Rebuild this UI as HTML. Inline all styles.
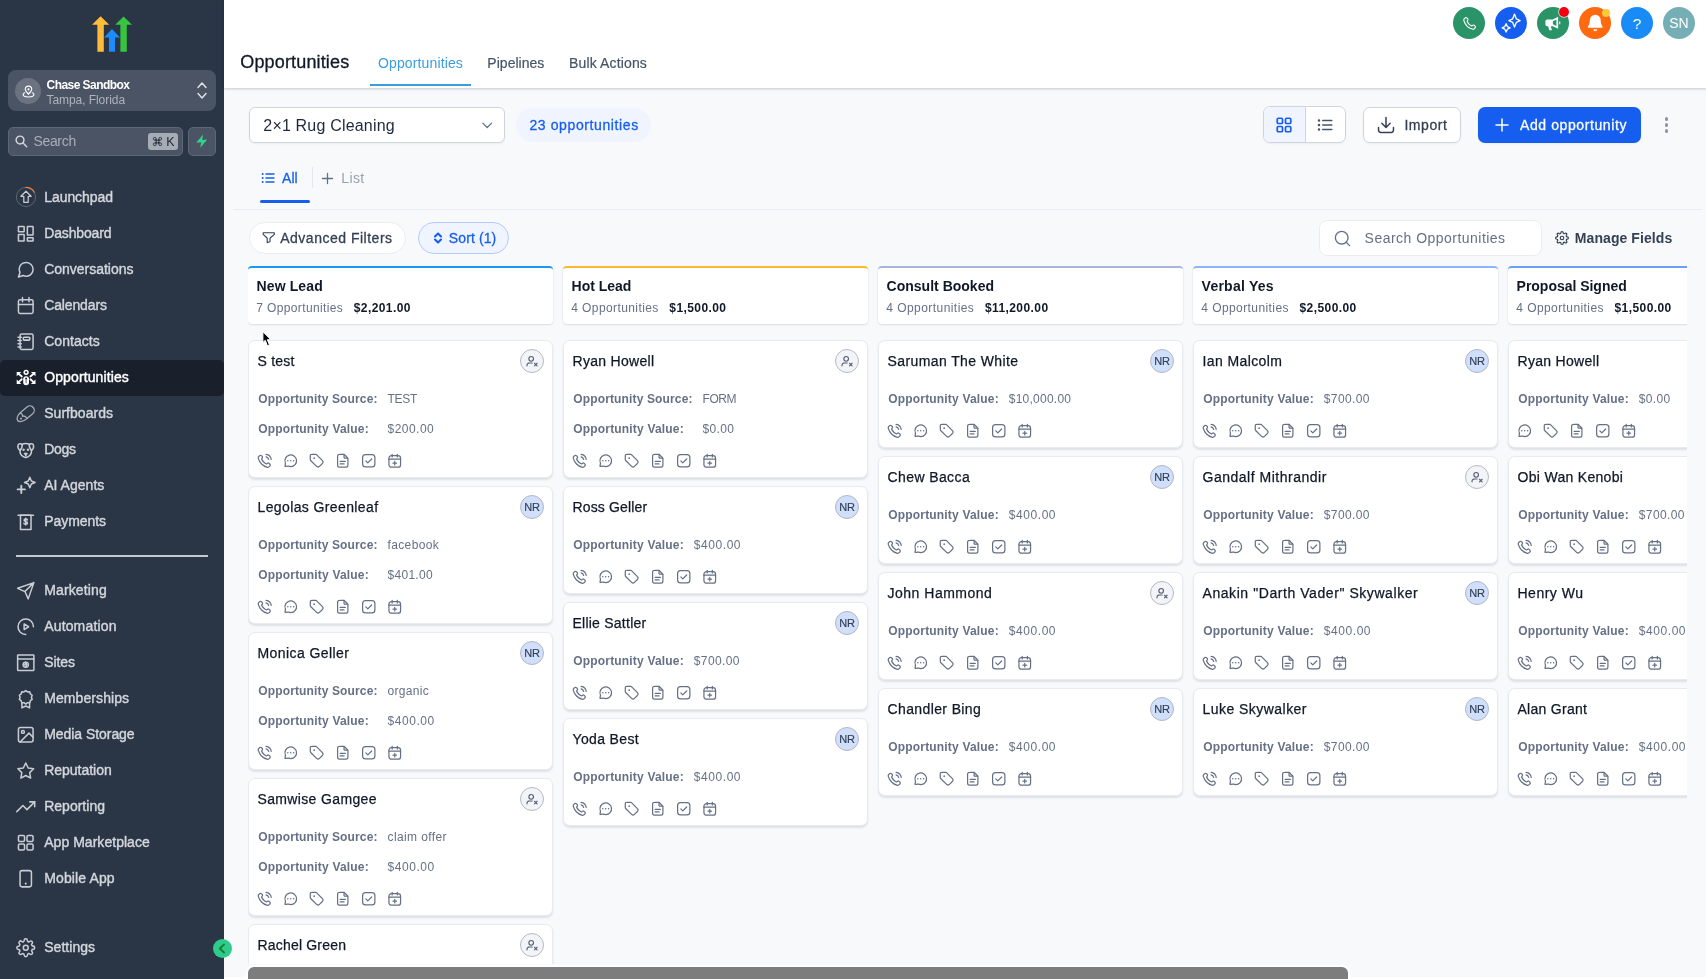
<!DOCTYPE html>
<html lang="en"><head><meta charset="utf-8"><title>Opportunities</title>
<style>
html,body{margin:0;padding:0;overflow:hidden}
body{width:1708px;height:979px;overflow:hidden;position:relative;background:#f8f9fb;font-family:"Liberation Sans",sans-serif;}
body div, body span, body svg{position:absolute;display:block}
span{white-space:nowrap}
svg{overflow:visible}
#sb{left:0;top:0;width:224px;height:979px;background:#2a3546;overflow:hidden}
#board{left:248px;top:266px;width:1438.700px;height:698px;overflow:hidden}
.colh{background:#fff;border-radius:4px;box-sizing:border-box;box-shadow:0 1px 2px rgba(16,24,40,.10),0 0 0 0.500px rgba(16,24,40,.05)}
.card{background:#fff;border-radius:7px;box-sizing:border-box;border:1px solid #e7eaef;box-shadow:0 1.500px 2px rgba(16,24,40,.10)}
svg.ai{fill:none;stroke:#667085;stroke-width:1.900;stroke-linecap:round;stroke-linejoin:round}
svg.ux{fill:none;stroke:#566175;stroke-width:2.200;stroke-linecap:round;stroke-linejoin:round}
#wrap{left:0;top:0;width:1708px;height:979px;will-change:transform;overflow:hidden}
#rband{left:1686px;top:88px;width:20px;height:891px;background:#f9fafb}
</style></head>
<body>
<div id="wrap">
<div id="sb">
<svg style="left:90px;top:14px" width="44" height="40" viewBox="90 14 44 40" stroke="none">
<path d="M100.600 16.200 L109.200 24.800 L103.800 24.800 L103.800 51.800 L97.400 51.800 L97.400 24.800 L92 24.800 Z" fill="#ffbc3a"/>
<path d="M123.600 16.400 L132 24.800 L126.800 24.800 L126.800 51.800 L120.400 51.800 L120.400 24.800 L115.200 24.800 Z" fill="#37c540"/>
<path d="M112 29 L120 37.600 L115 37.600 L115 51.800 L109 51.800 L109 37.600 L104 37.600 Z" fill="#1e8bfa"/>
</svg>
<div style="left:8px;top:70px;width:208px;height:41px;border-radius:8px;background:#4a5464"></div>
<div style="left:15px;top:78px;width:26px;height:26px;border-radius:13px;background:#6b7380"></div>
<svg style="left:21.50px;top:84.50px" width="13" height="13" viewBox="0 0 24 24" fill="none" stroke="#ffffff" stroke-width="2" stroke-linecap="round" stroke-linejoin="round" ><path d="M5 14.300C3.150 15.100 2 16.250 2 17.500 2 19.990 6.480 22 12 22s10-2.010 10-4.500c0-1.250-1.150-2.400-3-3.200M18 8c0 4.060-4.500 6-6 9-1.500-3-6-4.940-6-9a6 6 0 1 1 12 0zm-5 0a1 1 0 1 1-2 0 1 1 0 0 1 2 0z"/></svg>
<span style="left:46.50px;top:77px;font-size:12px;line-height:16px;color:#ffffff;font-weight:700;letter-spacing:-0.540px;">Chase Sandbox</span>
<span style="left:46.50px;top:92px;font-size:12px;line-height:16px;color:#aeb4bd;letter-spacing:-0.062px;">Tampa, Florida</span>
<svg style="left:196.00px;top:80.00px" width="12" height="9" viewBox="0 0 12 9" fill="none" stroke="#e3e5e8" stroke-width="1.4" stroke-linecap="round" stroke-linejoin="round" ><path d="M2 7.500 6 3l4 4.500"/></svg>
<svg style="left:196.00px;top:92.00px" width="12" height="9" viewBox="0 0 12 9" fill="none" stroke="#e3e5e8" stroke-width="1.4" stroke-linecap="round" stroke-linejoin="round" ><path d="M2 1.500 6 6l4-4.500"/></svg>
<div style="left:8px;top:127.300px;width:174.500px;height:28.400px;border-radius:5px;background:#4a5464;border:1px solid #5d6675;box-sizing:border-box"></div>
<svg style="left:13.50px;top:134.00px" width="14.5" height="14.5" viewBox="0 0 24 24" fill="none" stroke="#d3d6db" stroke-width="2.4" stroke-linecap="round" stroke-linejoin="round" ><circle cx="10" cy="10" r="6.500"/><path d="M15 15l6 6"/></svg>
<span style="left:33.40px;top:132px;font-size:14px;line-height:18px;color:#a9afb8;letter-spacing:-0.310px;">Search</span>
<div style="left:148px;top:133px;width:30px;height:16.500px;border-radius:3px;background:#a6acb5"></div>
<svg style="left:151.70px;top:135.80px" width="11" height="11" viewBox="0 0 24 24" fill="none" stroke="#1d2633" stroke-width="1.9" stroke-linecap="round" stroke-linejoin="round" ><path d="M9 9V6a3 3 0 1 0-3 3h3zm0 0v6m0-6h6m-6 6H6a3 3 0 1 0 3 3v-3zm0 0h6m0 0v3a3 3 0 1 0 3-3h-3zm0 0V9m0 0V6a3 3 0 1 1 3 3h-3z"/></svg>
<span style="left:166.30px;top:134px;font-size:12.5px;line-height:16px;color:#1d2633;">K</span>
<div style="left:188px;top:127.300px;width:28px;height:28.400px;border-radius:5px;background:#4a5464;border:1px solid #5d6675;box-sizing:border-box"></div>
<svg style="left:195.30px;top:134.30px" width="13.4" height="14.4" viewBox="0 0 12 13" fill="none" stroke="#667085" stroke-width="2" stroke-linecap="round" stroke-linejoin="round" ><path d="M7.200 0.500 L1 8 L5.500 7.500 L4.800 12.500 L11 5 L6.500 5.500 Z" fill="#2fd38d" stroke="none"/></svg>
<div style="left:0;top:360px;width:224px;height:35.500px;border-radius:5px;background:#19202c"></div>
<span style="left:44.20px;top:188px;font-size:14px;line-height:18px;color:#d3d6db;letter-spacing:-0.054px;-webkit-text-stroke:0.4px #d3d6db;">Launchpad</span>
<svg style="left:15px;top:186px" width="22" height="22" viewBox="0 0 22 22" fill="none" stroke-linecap="round" stroke-linejoin="round">
<circle cx="11" cy="11" r="9.600" stroke="#5b6676" stroke-width="1"/>
<path d="M11 1.400 A9.600 9.600 0 0 1 19.300 6.200" stroke="#e8833a" stroke-width="1.200"/>
<path d="M11 5.200 L16.100 10.300 H13.200 V16.300 H8.800 V10.300 H5.900 Z" stroke="#c9cdd3" stroke-width="1.250"/></svg>
<span style="left:44.20px;top:224px;font-size:14px;line-height:18px;color:#d3d6db;letter-spacing:-0.143px;-webkit-text-stroke:0.4px #d3d6db;">Dashboard</span>
<svg style="left:15.95px;top:224.05px" width="19.5" height="19.5" viewBox="0 0 24 24" fill="none" stroke="#c9cdd3" stroke-width="1.85" stroke-linecap="round" stroke-linejoin="round" color="#c9cdd3"><rect x="3" y="3" width="7" height="6.500" rx="0.3"/><rect x="14" y="3" width="7" height="10.500" rx="0.3"/><rect x="3" y="13" width="7" height="8" rx="0.3"/><rect x="14" y="17" width="7" height="4" rx="0.3"/></svg>
<span style="left:44.20px;top:260px;font-size:14px;line-height:18px;color:#d3d6db;letter-spacing:-0.015px;-webkit-text-stroke:0.4px #d3d6db;">Conversations</span>
<svg style="left:15.95px;top:260.05px" width="19.5" height="19.5" viewBox="0 0 24 24" fill="none" stroke="#c9cdd3" stroke-width="1.85" stroke-linecap="round" stroke-linejoin="round" color="#c9cdd3"><path d="M21 11.5a8.38 8.38 0 0 1-.9 3.8 8.5 8.5 0 0 1-7.6 4.7 8.38 8.38 0 0 1-3.8-.9L3 21l1.900-5.700a8.380 8.380 0 0 1-.900-3.800 8.500 8.500 0 0 1 4.700-7.600 8.380 8.380 0 0 1 3.800-.900h.500a8.480 8.480 0 0 1 8 8v.500z"/></svg>
<span style="left:44.20px;top:296px;font-size:14px;line-height:18px;color:#d3d6db;letter-spacing:-0.135px;-webkit-text-stroke:0.4px #d3d6db;">Calendars</span>
<svg style="left:15.95px;top:296.05px" width="19.5" height="19.5" viewBox="0 0 24 24" fill="none" stroke="#c9cdd3" stroke-width="1.85" stroke-linecap="round" stroke-linejoin="round" color="#c9cdd3"><rect x="3" y="4.500" width="18" height="17" rx="2"/><path d="M16 2v5M8 2v5M3 10.500h18"/></svg>
<span style="left:44.20px;top:332px;font-size:14px;line-height:18px;color:#d3d6db;letter-spacing:0.044px;-webkit-text-stroke:0.4px #d3d6db;">Contacts</span>
<svg style="left:15.95px;top:332.05px" width="19.5" height="19.5" viewBox="0 0 24 24" fill="none" stroke="#c9cdd3" stroke-width="1.85" stroke-linecap="round" stroke-linejoin="round" color="#c9cdd3"><rect x="5" y="2.500" width="16" height="19" rx="2"/><rect x="9" y="6.500" width="8" height="3.500" rx="1"/><path d="M2.500 6.500h4M2.500 10.500h4M2.500 14.500h4M2.500 18.500h4"/></svg>
<span style="left:44.20px;top:368px;font-size:14px;line-height:18px;color:#ffffff;letter-spacing:0.110px;-webkit-text-stroke:0.42px #ffffff;">Opportunities</span>
<svg style="left:16px;top:369px" width="20" height="18" viewBox="16 369 20 18" fill="#fff" stroke="#fff" stroke-width="1.800" stroke-linecap="round">
<circle cx="26.100" cy="372.300" r="1.900" fill="none" stroke-width="1.500"/>
<rect x="23.200" y="376.200" width="5.800" height="9" rx="2.900" stroke="none"/>
<circle cx="26.100" cy="378.400" r="0.900" fill="#19202c" stroke="none"/><path d="M26.100 379v3.800" stroke="#19202c" stroke-width="0.700"/>
<path d="M16.700 371.900h4.600l-4.600 4.300zM35.500 371.900h-4.600l4.600 4.300zM16.700 383.900h4.600l-4.600-4.300zM35.500 383.900h-4.600l4.600-4.300z" stroke="none"/>
<path d="M18.600 373.700l3.200 2.800M33.600 373.700l-3.200 2.800M18.600 382.100l3.200-2.800M33.600 382.100l-3.200-2.800"/></svg>
<span style="left:44.20px;top:404px;font-size:14px;line-height:18px;color:#d3d6db;letter-spacing:0.032px;-webkit-text-stroke:0.4px #d3d6db;">Surfboards</span>
<svg style="left:15.95px;top:404.05px" width="19.5" height="19.5" viewBox="0 0 24 24" fill="none" stroke="#c9cdd3" stroke-width="1.85" stroke-linecap="round" stroke-linejoin="round" color="#c9cdd3"><g transform="rotate(-40 12 12)" stroke="#a7adb7" stroke-width="1.600"><path d="M-1 12C-1 9 3.500 6.600 9 6.600H18.600a5.400 5.400 0 0 1 0 10.800H9C3.500 17.400 -1 15 -1 12Z"/><path d="M7 6.900c1.400 1.400 1.400 3.600 0 5 1.800 0.400 2.800 2.200 2.600 5.300"/><circle cx="3.600" cy="12.800" r="0.500" fill="#a7adb7"/></g></svg>
<span style="left:44.20px;top:440px;font-size:14px;line-height:18px;color:#d3d6db;letter-spacing:-0.296px;-webkit-text-stroke:0.4px #d3d6db;">Dogs</span>
<svg style="left:15.95px;top:440.05px" width="19.5" height="19.5" viewBox="0 0 24 24" fill="none" stroke="#c9cdd3" stroke-width="1.85" stroke-linecap="round" stroke-linejoin="round" color="#c9cdd3"><path d="M7.500 5.500c1.300-.900 2.800-1.300 4.500-1.300s3.200.400 4.500 1.300"/><path d="M7.500 5.500C5.500 4 3 4.500 2.500 6.500s.500 5 2.500 6.500c-.300 3.500 1.500 6 4 7.500.800.500 1.700 1 3 1s2.200-.500 3-1c2.500-1.500 4.300-4 4-7.500 2-1.500 3-4.500 2.500-6.500S18.500 4 16.500 5.500"/><path d="M7.500 5.500c.500 2-.500 5-2.500 7.500M16.500 5.500c-.500 2 .500 5 2.500 7.500"/><path d="M10.500 16.500h3l-1.500 1.700z" fill="currentColor"/><path d="M12 18.200v1.500"/><circle cx="9.300" cy="12" r=".6" fill="currentColor"/><circle cx="14.700" cy="12" r=".6" fill="currentColor"/></svg>
<span style="left:44.20px;top:476px;font-size:14px;line-height:18px;color:#d3d6db;letter-spacing:0.030px;-webkit-text-stroke:0.4px #d3d6db;">AI Agents</span>
<svg style="left:15.95px;top:476.05px" width="19.5" height="19.5" viewBox="0 0 24 24" fill="none" stroke="#c9cdd3" stroke-width="1.85" stroke-linecap="round" stroke-linejoin="round" color="#c9cdd3"><path d="M17 1.500l1.900 4.600 4.600 1.900-4.600 1.900-1.900 4.600-1.900-4.600-4.600-1.900 4.600-1.900z"/><path d="M6.500 12v9M2 16.500h9" stroke-width="2.300"/></svg>
<span style="left:44.20px;top:512px;font-size:14px;line-height:18px;color:#d3d6db;letter-spacing:-0.056px;-webkit-text-stroke:0.4px #d3d6db;">Payments</span>
<svg style="left:15.95px;top:512.05px" width="19.5" height="19.5" viewBox="0 0 24 24" fill="none" stroke="#c9cdd3" stroke-width="1.85" stroke-linecap="round" stroke-linejoin="round" color="#c9cdd3"><path d="M5.500 4h13v17.500h-13z"/><path d="M2.500 4h19"/><path d="M14 9.700c-.400-.700-1.100-1-2-1-1.200 0-2 .600-2 1.500 0 2.100 4.100 1 4.100 3.200 0 .900-.800 1.600-2.100 1.600-1 0-1.800-.400-2.200-1.100M12 7.700v8.300" stroke-width="1.900"/></svg>
<span style="left:44.20px;top:581px;font-size:14px;line-height:18px;color:#d3d6db;letter-spacing:0.126px;-webkit-text-stroke:0.4px #d3d6db;">Marketing</span>
<svg style="left:15.95px;top:581.05px" width="19.5" height="19.5" viewBox="0 0 24 24" fill="none" stroke="#c9cdd3" stroke-width="1.85" stroke-linecap="round" stroke-linejoin="round" color="#c9cdd3"><path d="M22 2L11 13M22 2l-7 20-4-9-9-4z"/></svg>
<span style="left:44.20px;top:617px;font-size:14px;line-height:18px;color:#d3d6db;letter-spacing:0.158px;-webkit-text-stroke:0.4px #d3d6db;">Automation</span>
<svg style="left:15.95px;top:617.05px" width="19.5" height="19.5" viewBox="0 0 24 24" fill="none" stroke="#c9cdd3" stroke-width="1.85" stroke-linecap="round" stroke-linejoin="round" color="#c9cdd3"><path d="M21.500 12A9.500 9.500 0 1 0 12 21.500"/><path d="M10 8.500l5.500 3.500-5.500 3.500z"/></svg>
<span style="left:44.20px;top:653px;font-size:14px;line-height:18px;color:#d3d6db;letter-spacing:-0.085px;-webkit-text-stroke:0.4px #d3d6db;">Sites</span>
<svg style="left:15.95px;top:653.05px" width="19.5" height="19.5" viewBox="0 0 24 24" fill="none" stroke="#c9cdd3" stroke-width="1.85" stroke-linecap="round" stroke-linejoin="round" color="#c9cdd3"><rect x="2" y="2.500" width="20" height="19" rx="0.500"/><path d="M2 7.500h20"/><circle cx="12" cy="14.500" r="3.300" stroke-width="1.600"/><path d="M8.700 14.500h6.600M12 11.200c-1.500 2-1.500 4.600 0 6.600M12 11.200c1.500 2 1.500 4.600 0 6.600" stroke-width="1.300"/></svg>
<span style="left:44.20px;top:689px;font-size:14px;line-height:18px;color:#d3d6db;letter-spacing:0.088px;-webkit-text-stroke:0.4px #d3d6db;">Memberships</span>
<svg style="left:15.95px;top:689.05px" width="19.5" height="19.5" viewBox="0 0 24 24" fill="none" stroke="#c9cdd3" stroke-width="1.85" stroke-linecap="round" stroke-linejoin="round" color="#c9cdd3"><path d="M12 2l2.200 1.600 2.700-.100.800 2.600 2.200 1.600-.900 2.500.900 2.600-2.200 1.600-.800 2.600-2.700-.100L12 18.500l-2.200-1.600-2.700.100-.800-2.600-2.200-1.600.900-2.600-.900-2.500 2.200-1.600.800-2.600 2.700.100z"/><path d="M7.300 16.800V23.300l4.700-2.400 4.700 2.400v-6.500"/></svg>
<span style="left:44.20px;top:725px;font-size:14px;line-height:18px;color:#d3d6db;letter-spacing:-0.050px;-webkit-text-stroke:0.4px #d3d6db;">Media Storage</span>
<svg style="left:15.95px;top:725.05px" width="19.5" height="19.5" viewBox="0 0 24 24" fill="none" stroke="#c9cdd3" stroke-width="1.85" stroke-linecap="round" stroke-linejoin="round" color="#c9cdd3"><rect x="3" y="3" width="18" height="18" rx="2.500"/><circle cx="8.500" cy="8.500" r="1.800"/><path d="M21 15l-5-5L5 21"/></svg>
<span style="left:44.20px;top:761px;font-size:14px;line-height:18px;color:#d3d6db;letter-spacing:-0.022px;-webkit-text-stroke:0.4px #d3d6db;">Reputation</span>
<svg style="left:15.95px;top:761.05px" width="19.5" height="19.5" viewBox="0 0 24 24" fill="none" stroke="#c9cdd3" stroke-width="1.85" stroke-linecap="round" stroke-linejoin="round" color="#c9cdd3"><path d="M12 2.500l3 6.100 6.700 1-4.850 4.700 1.150 6.700-6-3.150-6 3.150 1.150-6.700L2.300 9.600l6.700-1z"/></svg>
<span style="left:44.20px;top:797px;font-size:14px;line-height:18px;color:#d3d6db;letter-spacing:0.011px;-webkit-text-stroke:0.4px #d3d6db;">Reporting</span>
<svg style="left:15.95px;top:797.05px" width="19.5" height="19.5" viewBox="0 0 24 24" fill="none" stroke="#c9cdd3" stroke-width="1.85" stroke-linecap="round" stroke-linejoin="round" color="#c9cdd3"><path d="M23 6l-9.500 9.500-5-5L1 18"/><path d="M17 6h6v6"/></svg>
<span style="left:44.20px;top:833px;font-size:14px;line-height:18px;color:#d3d6db;letter-spacing:0.036px;-webkit-text-stroke:0.4px #d3d6db;">App Marketplace</span>
<svg style="left:15.95px;top:833.05px" width="19.5" height="19.5" viewBox="0 0 24 24" fill="none" stroke="#c9cdd3" stroke-width="1.85" stroke-linecap="round" stroke-linejoin="round" color="#c9cdd3"><rect x="3" y="3" width="7.500" height="7.500" rx="1.500"/><rect x="13.500" y="3" width="7.500" height="7.500" rx="1.500"/><rect x="3" y="13.500" width="7.500" height="7.500" rx="1.500"/><rect x="13.500" y="13.500" width="7.500" height="7.500" rx="1.500"/></svg>
<span style="left:44.20px;top:869px;font-size:14px;line-height:18px;color:#d3d6db;letter-spacing:0.133px;-webkit-text-stroke:0.4px #d3d6db;">Mobile App</span>
<svg style="left:15.95px;top:869.05px" width="19.5" height="19.5" viewBox="0 0 24 24" fill="none" stroke="#c9cdd3" stroke-width="1.85" stroke-linecap="round" stroke-linejoin="round" color="#c9cdd3"><rect x="5" y="2" width="14" height="20" rx="2.500"/><path d="M12 18h.01" stroke-width="2.500"/></svg>
<span style="left:44.20px;top:938px;font-size:14px;line-height:18px;color:#d3d6db;letter-spacing:0.039px;-webkit-text-stroke:0.4px #d3d6db;">Settings</span>
<svg style="left:15.95px;top:938.05px" width="19.5" height="19.5" viewBox="0 0 24 24" fill="none" stroke="#c9cdd3" stroke-width="1.85" stroke-linecap="round" stroke-linejoin="round" color="#c9cdd3"><circle cx="12" cy="12" r="3"/><path d="M19.400 15a1.650 1.650 0 0 0 .330 1.820l.060.060a2 2 0 1 1-2.830 2.830l-.060-.060a1.650 1.650 0 0 0-1.820-.330 1.650 1.650 0 0 0-1 1.510V21a2 2 0 0 1-4 0v-.090A1.650 1.650 0 0 0 9 19.400a1.650 1.650 0 0 0-1.820.330l-.060.060a2 2 0 1 1-2.830-2.830l.060-.060a1.650 1.650 0 0 0 .330-1.820 1.650 1.650 0 0 0-1.510-1H3a2 2 0 0 1 0-4h.090A1.650 1.650 0 0 0 4.600 9a1.650 1.650 0 0 0-.330-1.820l-.060-.060a2 2 0 1 1 2.830-2.830l.060.060a1.650 1.650 0 0 0 1.820.330H9a1.650 1.650 0 0 0 1-1.510V3a2 2 0 0 1 4 0v.090a1.650 1.650 0 0 0 1 1.510 1.650 1.650 0 0 0 1.820-.330l.060-.060a2 2 0 1 1 2.830 2.830l-.060.060a1.650 1.650 0 0 0-.330 1.820V9a1.650 1.650 0 0 0 1.510 1H21a2 2 0 0 1 0 4h-.090a1.650 1.650 0 0 0-1.510 1z"/></svg>
<div style="left:16px;top:555px;width:192px;height:1.500px;background:#c5c9cf"></div>
</div>
<div style="left:213px;top:939.100px;width:19.200px;height:19.200px;border-radius:10px;background:#2ecb8c"></div>
<svg style="left:216.60px;top:943.20px" width="11" height="11" viewBox="0 0 11 11" fill="none" stroke="#1c7f2b" stroke-width="1.9" stroke-linecap="round" stroke-linejoin="round" ><path d="M7 1.500 2.800 5.500l4.200 4"/></svg>
<div style="left:224px;top:0;width:1484px;height:88px;background:#fff;box-shadow:0 1px 3px rgba(16,24,40,.14),0 1px 2px rgba(16,24,40,.08)"></div>
<span style="left:240.30px;top:51px;font-size:18px;line-height:22px;color:#101828;letter-spacing:0.149px;-webkit-text-stroke:0.3px #101828;">Opportunities</span>
<span style="left:378.00px;top:54px;font-size:14px;line-height:18px;color:#3b9ddd;letter-spacing:0.133px;">Opportunities</span>
<span style="left:487.30px;top:54px;font-size:14px;line-height:18px;color:#475467;letter-spacing:0.032px;-webkit-text-stroke:0.2px #475467;">Pipelines</span>
<span style="left:569.00px;top:54px;font-size:14px;line-height:18px;color:#475467;letter-spacing:0.145px;-webkit-text-stroke:0.2px #475467;">Bulk Actions</span>
<div style="left:370px;top:83.500px;width:101px;height:2.500px;background:#3b9ddd"></div>
<div style="left:1453px;top:7px;width:32px;height:32px;border-radius:16px;background:#2a9368"></div>
<svg style="left:1461.50px;top:15.50px" width="15" height="15" viewBox="0 0 24 24" fill="none" stroke="#fff" stroke-width="1.8" stroke-linecap="round" stroke-linejoin="round" ><path d="M8.380 8.853a14.603 14.603 0 0 0 2.847 4.010 14.603 14.603 0 0 0 4.010 2.847c.124.060.187.090.265.112.280.082.625.023.862-.147.067-.048.124-.105.239-.219.350-.350.524-.524.700-.639a2 2 0 0 1 2.180 0c.176.115.350.290.700.639l.195.195c.532.531.797.797.942 1.082a2 2 0 0 1 0 1.806c-.145.285-.410.551-.942 1.082l-.157.158c-.530.530-.795.794-1.155.997-.400.224-1.020.386-1.478.384-.413-.001-.695-.081-1.260-.241a19.038 19.038 0 0 1-8.283-4.874A19.039 19.039 0 0 1 3.170 7.761c-.160-.564-.240-.846-.241-1.260-.002-.458.160-1.079.384-1.478.203-.360.468-.625.997-1.155l.158-.157c.531-.532.797-.797 1.082-.942a2 2 0 0 1 1.806 0c.285.145.551.410 1.082.942l.195.195c.350.350.524.524.639.700a2 2 0 0 1 0 2.180c-.115.176-.290.350-.639.700-.114.115-.171.172-.219.239-.170.237-.229.582-.147.862.022.078.052.140.112.265z"/></svg>
<div style="left:1495px;top:7px;width:32px;height:32px;border-radius:16px;background:#155eef"></div>
<svg style="left:1495px;top:7px" width="32" height="32" viewBox="1495 7 32 32" fill="none" stroke="#fff" stroke-width="1.300" stroke-linejoin="round"><path d="M1514.5 14.100000000000001L1516.3 18.8L1520.1 20.6L1516.3 22.400000000000002L1514.5 27.1L1512.7 22.400000000000002L1508.9 20.6L1512.7 18.8Z"/><path d="M1506.1 23.7L1507.3999999999999 26.599999999999998L1510.1 27.9L1507.3999999999999 29.2L1506.1 32.1L1504.8 29.2L1502.1 27.9L1504.8 26.599999999999998Z"/></svg>
<div style="left:1537px;top:7px;width:32px;height:32px;border-radius:16px;background:#2a9368"></div>
<svg style="left:1544px;top:14.500px" width="17" height="17" viewBox="0 0 24 24" fill="#fff" stroke="none">
<path d="M20 2.500v17l-7.500-3.700H9.500l1.700 5.700H7.500L5.800 15.800H4.500A2.500 2.500 0 0 1 2 13.300v-4.600A2.500 2.500 0 0 1 4.500 6.200h8zM17.500 6.500l-5 2.300v4.400l5 2.300z" fill-rule="evenodd"/><path d="M21.500 9h1.500v4h-1.500z"/></svg>
<div style="left:1559px;top:7px;width:10px;height:10px;border-radius:5px;background:#f5000e;box-shadow:0 0 0 0.800px rgba(255,255,255,.8)"></div>
<div style="left:1579px;top:7px;width:32px;height:32px;border-radius:16px;background:#ff6a0f"></div>
<svg style="left:1585.900px;top:13.300px" width="18.500" height="19.500" viewBox="0 0 24 25" fill="#fff" stroke="none">
<path d="M12 2a7 7 0 0 0-7 7c0 3.500-.900 5.800-1.900 7.300-.500.700-.700 1.100-.700 1.400 0 .700.500 1.300 1.300 1.300h16.600c.800 0 1.300-.600 1.300-1.300 0-.300-.200-.700-.700-1.400C19.900 14.800 19 12.500 19 9a7 7 0 0 0-7-7z"/><path d="M9.500 21a2.500 2.500 0 0 0 5 0z"/></svg>
<div style="left:1601.5px;top:8.5px;width:8px;height:8px;border-radius:4px;background:#fdc83a"></div>
<div style="left:1621px;top:7px;width:32px;height:32px;border-radius:16px;background:#188bf6"></div>
<span style="left:1632.69px;top:14px;font-size:15.5px;line-height:19px;color:#fff;">?</span>
<div style="left:1663px;top:7px;width:32px;height:32px;border-radius:16px;background:#76aeb6"></div>
<span style="left:1669.28px;top:14px;font-size:14px;line-height:18px;color:#fff;">SN</span>
<div style="left:249px;top:107px;width:256px;height:36px;border-radius:6px;background:#fff;border:1px solid #d0d5dd;box-sizing:border-box;box-shadow:0 1px 2px rgba(16,24,40,.05)"></div>
<span style="left:263.30px;top:116px;font-size:16px;line-height:19px;color:#1d2939;letter-spacing:0.185px;">2×1 Rug Cleaning</span>
<svg style="left:480.80px;top:119.60px" width="12.4" height="10.6" viewBox="0 0 14 12" fill="none" stroke="#667085" stroke-width="1.4" stroke-linecap="round" stroke-linejoin="round" ><path d="M2 3.500 7 8.500l5-5"/></svg>
<div style="left:516px;top:108px;width:135px;height:34px;border-radius:17px;background:#eff4ff"></div>
<span style="left:529.40px;top:116px;font-size:14px;line-height:18px;color:#155eef;letter-spacing:0.611px;-webkit-text-stroke:0.28px #155eef;">23 opportunities</span>
<div style="left:1263px;top:106.200px;width:82.800px;height:37.300px;border-radius:7px;background:#fff;border:1px solid #d0d5dd;box-sizing:border-box;overflow:hidden;box-shadow:0 1px 2px rgba(16,24,40,.05)"><div style="left:0;top:0;width:41px;height:37px;background:#eff4ff;border-right:1px solid #d0d5dd"></div></div>
<svg style="left:1275.00px;top:116.00px" width="18" height="18" viewBox="0 0 24 24" fill="none" stroke="#155eef" stroke-width="2.3" stroke-linecap="round" stroke-linejoin="round" ><rect x="3" y="3" width="7" height="7" rx="1.500"/><rect x="14" y="3" width="7" height="7" rx="1.500"/><rect x="3" y="14" width="7" height="7" rx="1.500"/><rect x="14" y="14" width="7" height="7" rx="1.500"/></svg>
<svg style="left:1316.00px;top:116.00px" width="18" height="18" viewBox="0 0 24 24" fill="none" stroke="#475467" stroke-width="2.2" stroke-linecap="round" stroke-linejoin="round" ><path d="M21 12H9M21 6H9M21 18H9"/><path d="M4 12h.01M4 6h.01M4 18h.01" stroke-width="3.400"/></svg>
<div style="left:1362.500px;top:107px;width:98.500px;height:36px;border-radius:7px;background:#fff;border:1px solid #d0d5dd;box-sizing:border-box;box-shadow:0 1px 2px rgba(16,24,40,.05)"></div>
<svg style="left:1376.00px;top:115.00px" width="20" height="20" viewBox="0 0 24 24" fill="none" stroke="#344054" stroke-width="1.8" stroke-linecap="round" stroke-linejoin="round" ><path d="M21 15v1.200c0 1.680 0 2.520-.327 3.162a3 3 0 0 1-1.311 1.311C18.720 21 17.880 21 16.200 21H7.800c-1.680 0-2.520 0-3.162-.327a3 3 0 0 1-1.311-1.311C3 18.720 3 17.880 3 16.200V15m14-5-5 5m0 0-5-5m5 5V3"/></svg>
<span style="left:1404.40px;top:116px;font-size:14px;line-height:18px;color:#344054;letter-spacing:0.554px;-webkit-text-stroke:0.28px #344054;">Import</span>
<div style="left:1477.500px;top:107px;width:163.500px;height:36px;border-radius:7px;background:#155eef;box-shadow:0 1px 2px rgba(16,24,40,.05)"></div>
<svg style="left:1493.50px;top:117.00px" width="16" height="16" viewBox="0 0 16 16" fill="none" stroke="#fff" stroke-width="1.5" stroke-linecap="round" stroke-linejoin="round" ><path d="M8 2v12M2 8h12"/></svg>
<span style="left:1520.00px;top:116px;font-size:14px;line-height:18px;color:#ffffff;letter-spacing:0.596px;-webkit-text-stroke:0.28px #ffffff;">Add opportunity</span>
<div style="left:1665.0px;top:117.3px;width:3.4px;height:3.4px;border-radius:1.7px;background:#8c95a6"></div>
<div style="left:1665.0px;top:123.3px;width:3.4px;height:3.4px;border-radius:1.7px;background:#8c95a6"></div>
<div style="left:1665.0px;top:129.3px;width:3.4px;height:3.4px;border-radius:1.7px;background:#8c95a6"></div>
<svg style="left:259.50px;top:170.00px" width="16" height="16" viewBox="0 0 24 24" fill="none" stroke="#155eef" stroke-width="2.2" stroke-linecap="round" stroke-linejoin="round" ><path d="M21 12H9M21 6H9M21 18H9"/><path d="M4 12h.01M4 6h.01M4 18h.01" stroke-width="3"/></svg>
<span style="left:282.00px;top:169px;font-size:14px;line-height:18px;color:#155eef;letter-spacing:0.080px;-webkit-text-stroke:0.28px #155eef;">All</span>
<div style="left:260px;top:199.500px;width:50px;height:3px;border-radius:1.500px;background:#155eef"></div>
<div style="left:312px;top:167px;width:1px;height:21px;background:#e4e7ec"></div>
<svg style="left:320.50px;top:171.50px" width="13" height="13" viewBox="0 0 13 13" fill="none" stroke="#667085" stroke-width="1.3" stroke-linecap="round" stroke-linejoin="round" ><path d="M6.500 1.500v10M1.500 6.500h10"/></svg>
<span style="left:341.30px;top:169px;font-size:14px;line-height:18px;color:#98a2b3;letter-spacing:0.354px;">List</span>
<div style="left:233px;top:208.500px;width:1469px;height:1px;background:#eaecf0"></div>
<div style="left:249px;top:222px;width:157px;height:31.500px;border-radius:16px;background:#fff;border:1px solid #eaecf0;box-sizing:border-box"></div>
<svg style="left:262.00px;top:231.00px" width="13.5" height="13.5" viewBox="0 0 24 24" fill="none" stroke="#344054" stroke-width="2" stroke-linecap="round" stroke-linejoin="round" ><path d="M2 4.600c0-.560 0-.840.109-1.054a1 1 0 0 1 .437-.437C2.760 3 3.040 3 3.600 3h16.800c.560 0 .840 0 1.054.109a1 1 0 0 1 .437.437C22 3.760 22 4.040 22 4.600v.669c0 .269 0 .403-.033.528a1 1 0 0 1-.144.316c-.073.107-.175.195-.378.371l-6.396 5.543c-.203.176-.305.264-.378.371a1 1 0 0 0-.144.316c-.33.125-.33.260-.33.528v5.227c0 .196 0 .294-.032.378a.5.500 0 0 1-.132.196c-.067.060-.158.097-.340.170l-3.400 1.360c-.367.147-.551.220-.699.190a.5.500 0 0 1-.315-.213c-.083-.126-.083-.324-.083-.720v-6.588c0-.269 0-.403-.033-.528a1 1 0 0 0-.144-.316c-.073-.107-.175-.195-.378-.371L2.555 6.484c-.203-.176-.305-.264-.378-.371a1 1 0 0 1-.144-.316C2 5.672 2 5.538 2 5.269V4.600z"/></svg>
<span style="left:280.20px;top:229px;font-size:14px;line-height:18px;color:#344054;letter-spacing:0.508px;-webkit-text-stroke:0.28px #344054;">Advanced Filters</span>
<div style="left:418px;top:222px;width:91px;height:31.500px;border-radius:16px;background:#eff4ff;border:1px solid #b2ccff;box-sizing:border-box"></div>
<svg style="left:432.00px;top:231.00px" width="12" height="14" viewBox="0 0 12 14" fill="none" stroke="#155eef" stroke-width="2.1" stroke-linecap="round" stroke-linejoin="round" ><path d="M3 5.500 6 2.500l3 3M3 8.500l3 3 3-3"/></svg>
<span style="left:448.80px;top:229px;font-size:14px;line-height:18px;color:#155eef;letter-spacing:0.116px;-webkit-text-stroke:0.28px #155eef;">Sort (1)</span>
<div style="left:1319px;top:219.800px;width:223.300px;height:35.900px;border-radius:8px;background:#fff;border:1px solid #eaecf0;box-sizing:border-box"></div>
<svg style="left:1332.50px;top:228.50px" width="19" height="19" viewBox="0 0 24 24" fill="none" stroke="#667085" stroke-width="1.7" stroke-linecap="round" stroke-linejoin="round" ><circle cx="11" cy="11" r="8"/><path d="M21 21l-4.300-4.300"/></svg>
<span style="left:1364.60px;top:229px;font-size:14px;line-height:18px;color:#667085;letter-spacing:0.474px;">Search Opportunities</span>
<svg style="left:1555.00px;top:231.00px" width="14" height="14" viewBox="0 0 24 24" fill="none" stroke="#344054" stroke-width="2" stroke-linecap="round" stroke-linejoin="round" ><circle cx="12" cy="12" r="3"/><path d="M19.400 15a1.650 1.650 0 0 0 .330 1.820l.060.060a2 2 0 1 1-2.830 2.830l-.060-.060a1.650 1.650 0 0 0-1.820-.330 1.650 1.650 0 0 0-1 1.510V21a2 2 0 0 1-4 0v-.090A1.650 1.650 0 0 0 9 19.400a1.650 1.650 0 0 0-1.820.330l-.060.060a2 2 0 1 1-2.830-2.830l.060-.060a1.650 1.650 0 0 0 .330-1.820 1.650 1.650 0 0 0-1.510-1H3a2 2 0 0 1 0-4h.090A1.650 1.650 0 0 0 4.600 9a1.650 1.650 0 0 0-.330-1.820l-.060-.060a2 2 0 1 1 2.830-2.830l.060.060a1.650 1.650 0 0 0 1.820.330H9a1.650 1.650 0 0 0 1-1.510V3a2 2 0 0 1 4 0v.090a1.650 1.650 0 0 0 1 1.510 1.650 1.650 0 0 0 1.820-.330l.060-.060a2 2 0 1 1 2.830 2.830l-.060.060a1.650 1.650 0 0 0-.330 1.820V9a1.650 1.650 0 0 0 1.510 1H21a2 2 0 0 1 0 4h-.090a1.650 1.650 0 0 0-1.510 1z"/></svg>
<span style="left:1574.80px;top:229px;font-size:14px;line-height:18px;color:#344054;font-weight:700;letter-spacing:0.080px;">Manage Fields</span>
<svg width="0" height="0" style="left:0;top:0"><defs><symbol id="i-phone" viewBox="0 0 24 24"><path d="M14.050 6A5 5 0 0 1 18 9.950M14.050 2A9 9 0 0 1 22 9.940M10.227 13.863a14.604 14.604 0 0 1-2.847-4.010 1.698 1.698 0 0 1-.113-.266 1.046 1.046 0 0 1 .147-.862c.048-.067.105-.124.220-.238.350-.350.524-.524.638-.700a2 2 0 0 0 0-2.180c-.114-.176-.289-.350-.638-.700l-.195-.195c-.532-.531-.797-.797-1.083-.941a2 2 0 0 0-1.805 0c-.285.144-.551.410-1.083.941l-.157.158c-.530.530-.795.794-.997 1.154-.224.400-.386 1.020-.384 1.479 0 .413.080.695.240 1.260a19.038 19.038 0 0 0 4.874 8.283 19.039 19.039 0 0 0 8.283 4.873c.565.160.847.240 1.260.242.459.001 1.080-.160 1.480-.385.360-.202.624-.466 1.153-.996l.158-.158c.531-.531.797-.797.941-1.082a2 2 0 0 0 0-1.806c-.144-.285-.410-.551-.941-1.082l-.195-.195c-.350-.350-.524-.524-.700-.639a2 2 0 0 0-2.180 0c-.176.115-.350.290-.700.639-.114.114-.171.171-.238.220-.238.170-.580.228-.862.146a1.695 1.695 0 0 1-.266-.113 14.605 14.605 0 0 1-4.010-2.847z"/></symbol><symbol id="i-chat" viewBox="0 0 24 24"><path d="M7.500 12h.01M12 12h.01M16.500 12h.01" stroke-width="2.400"/><path d="M12 21a9 9 0 1 0-8.342-5.616c.081.200.122.300.140.381a.920.920 0 0 1 .024.219c0 .083-.015.173-.045.353l-.593 3.558c-.062.373-.093.560-.035.694a.500.500 0 0 0 .262.262c.135.058.321.027.694-.035l3.558-.593c.180-.030.270-.045.353-.045.081 0 .140.006.219.024.080.018.180.059.380.140A8.975 8.975 0 0 0 12 21z"/></symbol><symbol id="i-tag" viewBox="0 0 24 24"><path d="M8 8h.01" stroke-width="2.600"/><path d="M2 5.200v4.475c0 .489 0 .733.055.963.050.204.130.400.240.579.123.201.296.374.642.720l7.669 7.669c1.188 1.188 1.782 1.782 2.467 2.004a3 3 0 0 0 1.854 0c.685-.222 1.280-.816 2.467-2.004l2.212-2.212c1.188-1.188 1.782-1.782 2.004-2.467a3 3 0 0 0 0-1.854c-.222-.685-.816-1.280-2.004-2.467l-7.669-7.669c-.346-.346-.519-.519-.720-.642a2 2 0 0 0-.579-.240C10.409 2 10.165 2 9.676 2H5.200c-1.120 0-1.680 0-2.108.218a2 2 0 0 0-.874.874C2 3.520 2 4.080 2 5.200z"/></symbol><symbol id="i-doc" viewBox="0 0 24 24"><path d="M14 2.270V6.400c0 .560 0 .840.109 1.054a1 1 0 0 0 .437.437c.214.109.494.109 1.054.109h4.130M14 17H8m8-4H8"/><path d="M20 9.988V17.200c0 1.680 0 2.520-.327 3.162a3 3 0 0 1-1.311 1.311C17.720 22 16.880 22 15.200 22H8.800c-1.680 0-2.520 0-3.162-.327a3 3 0 0 1-1.311-1.311C4 19.720 4 18.880 4 17.200V6.800c0-1.680 0-2.520.327-3.162a3 3 0 0 1 1.311-1.311C6.280 2 7.120 2 8.800 2h3.212c.733 0 1.100 0 1.446.083.306.073.598.195.867.359.303.186.562.445 1.080.964l3.190 3.188c.518.519.777.778.963 1.081a3 3 0 0 1 .360.867c.082.346.082.712.082 1.446z"/></symbol><symbol id="i-check" viewBox="0 0 24 24"><rect x="2.500" y="2.500" width="19" height="19" rx="4.500"/><path d="M7.500 12.200l3 3 6-6"/></symbol><symbol id="i-cal" viewBox="0 0 24 24"><rect x="3" y="4" width="18" height="18" rx="4"/><path d="M3 9.500h18M16 2v4M8 2v4M12 13v5.500M9.250 15.750h5.500"/></symbol><symbol id="i-userx" viewBox="0 0 24 24"><path d="M16.500 16l5 5m0-5l-5 5M12 15.500H7.500c-1.396 0-2.093 0-2.661.172a4 4 0 0 0-2.667 2.667C2 18.907 2 19.604 2 21M14.500 7.500a4.500 4.500 0 1 1-9 0 4.500 4.500 0 0 1 9 0z"/></symbol></defs></svg>
<div id="board">
<div class="colh" style="left:0px;top:0;width:305px;height:58px;border-top:2px solid #1a98f5"></div>
<span style="left:8.60px;top:11px;font-size:14px;line-height:18px;color:#101828;font-weight:700;letter-spacing:0.106px;">New Lead</span>
<span style="left:8.30px;top:34px;font-size:12px;line-height:16px;color:#667085;letter-spacing:0.361px;">7 Opportunities</span>
<span style="left:105.70px;top:34px;font-size:12px;line-height:16px;color:#101828;font-weight:700;letter-spacing:0.420px;">$2,201.00</span>
<div class="card" style="left:0.3px;top:74.0px;width:304.500px;height:137.7px"></div><span style="left:9.50px;top:86px;font-size:14px;line-height:18px;color:#101828;letter-spacing:0.202px;-webkit-text-stroke:0.25px #101828;">S test</span><div style="left:272px;top:83.0px;width:24px;height:24px;border-radius:12px;background:#f2f4f7;border:1px solid #b3bac6;box-sizing:border-box"></div><svg class="ux" style="left:277.80px;top:88.80px" width="12.4" height="12.4"><use href="#i-userx"/></svg><span style="left:10.30px;top:125px;font-size:12px;line-height:16px;color:#667085;font-weight:700;letter-spacing:0.139px;">Opportunity Source:</span><span style="left:139.50px;top:125px;font-size:12px;line-height:16px;color:#667085;letter-spacing:-0.292px;">TEST</span><span style="left:10.30px;top:155px;font-size:12px;line-height:16px;color:#667085;font-weight:700;letter-spacing:0.176px;">Opportunity Value:</span><span style="left:139.50px;top:155px;font-size:12px;line-height:16px;color:#667085;letter-spacing:0.475px;">$200.00</span><svg class="ai" style="left:9.45px;top:187.15px" width="15.5" height="15.5"><use href="#i-phone"/></svg><svg class="ai" style="left:35.45px;top:187.15px" width="15.5" height="15.5"><use href="#i-chat"/></svg><svg class="ai" style="left:61.45px;top:187.15px" width="15.5" height="15.5"><use href="#i-tag"/></svg><svg class="ai" style="left:87.45px;top:187.15px" width="15.5" height="15.5"><use href="#i-doc"/></svg><svg class="ai" style="left:113.45px;top:187.15px" width="15.5" height="15.5"><use href="#i-check"/></svg><svg class="ai" style="left:139.45px;top:187.15px" width="15.5" height="15.5"><use href="#i-cal"/></svg>
<div class="card" style="left:0.3px;top:220.0px;width:304.500px;height:137.7px"></div><span style="left:9.50px;top:232px;font-size:14px;line-height:18px;color:#101828;letter-spacing:0.382px;-webkit-text-stroke:0.25px #101828;">Legolas Greenleaf</span><div style="left:272px;top:229.0px;width:24px;height:24px;border-radius:12px;background:#d0dffc;border:1px solid #b3b7c2;box-sizing:border-box"></div><span style="left:276.21px;top:234px;font-size:11px;line-height:14px;color:#333f52;letter-spacing:-0.100px;-webkit-text-stroke:0.15px #333f52;">NR</span><span style="left:10.30px;top:271px;font-size:12px;line-height:16px;color:#667085;font-weight:700;letter-spacing:0.139px;">Opportunity Source:</span><span style="left:139.50px;top:271px;font-size:12px;line-height:16px;color:#667085;letter-spacing:0.362px;">facebook</span><span style="left:10.30px;top:301px;font-size:12px;line-height:16px;color:#667085;font-weight:700;letter-spacing:0.176px;">Opportunity Value:</span><span style="left:139.50px;top:301px;font-size:12px;line-height:16px;color:#667085;letter-spacing:0.289px;">$401.00</span><svg class="ai" style="left:9.45px;top:333.15px" width="15.5" height="15.5"><use href="#i-phone"/></svg><svg class="ai" style="left:35.45px;top:333.15px" width="15.5" height="15.5"><use href="#i-chat"/></svg><svg class="ai" style="left:61.45px;top:333.15px" width="15.5" height="15.5"><use href="#i-tag"/></svg><svg class="ai" style="left:87.45px;top:333.15px" width="15.5" height="15.5"><use href="#i-doc"/></svg><svg class="ai" style="left:113.45px;top:333.15px" width="15.5" height="15.5"><use href="#i-check"/></svg><svg class="ai" style="left:139.45px;top:333.15px" width="15.5" height="15.5"><use href="#i-cal"/></svg>
<div class="card" style="left:0.3px;top:366.0px;width:304.500px;height:137.7px"></div><span style="left:9.50px;top:378px;font-size:14px;line-height:18px;color:#101828;letter-spacing:0.418px;-webkit-text-stroke:0.25px #101828;">Monica Geller</span><div style="left:272px;top:375.0px;width:24px;height:24px;border-radius:12px;background:#d0dffc;border:1px solid #b3b7c2;box-sizing:border-box"></div><span style="left:276.21px;top:380px;font-size:11px;line-height:14px;color:#333f52;letter-spacing:-0.100px;-webkit-text-stroke:0.15px #333f52;">NR</span><span style="left:10.30px;top:417px;font-size:12px;line-height:16px;color:#667085;font-weight:700;letter-spacing:0.139px;">Opportunity Source:</span><span style="left:139.50px;top:417px;font-size:12px;line-height:16px;color:#667085;letter-spacing:0.321px;">organic</span><span style="left:10.30px;top:447px;font-size:12px;line-height:16px;color:#667085;font-weight:700;letter-spacing:0.176px;">Opportunity Value:</span><span style="left:139.50px;top:447px;font-size:12px;line-height:16px;color:#667085;letter-spacing:0.561px;">$400.00</span><svg class="ai" style="left:9.45px;top:479.15px" width="15.5" height="15.5"><use href="#i-phone"/></svg><svg class="ai" style="left:35.45px;top:479.15px" width="15.5" height="15.5"><use href="#i-chat"/></svg><svg class="ai" style="left:61.45px;top:479.15px" width="15.5" height="15.5"><use href="#i-tag"/></svg><svg class="ai" style="left:87.45px;top:479.15px" width="15.5" height="15.5"><use href="#i-doc"/></svg><svg class="ai" style="left:113.45px;top:479.15px" width="15.5" height="15.5"><use href="#i-check"/></svg><svg class="ai" style="left:139.45px;top:479.15px" width="15.5" height="15.5"><use href="#i-cal"/></svg>
<div class="card" style="left:0.3px;top:512.0px;width:304.500px;height:137.7px"></div><span style="left:9.50px;top:524px;font-size:14px;line-height:18px;color:#101828;letter-spacing:0.352px;-webkit-text-stroke:0.25px #101828;">Samwise Gamgee</span><div style="left:272px;top:521.0px;width:24px;height:24px;border-radius:12px;background:#f2f4f7;border:1px solid #b3bac6;box-sizing:border-box"></div><svg class="ux" style="left:277.80px;top:526.80px" width="12.4" height="12.4"><use href="#i-userx"/></svg><span style="left:10.30px;top:563px;font-size:12px;line-height:16px;color:#667085;font-weight:700;letter-spacing:0.139px;">Opportunity Source:</span><span style="left:139.50px;top:563px;font-size:12px;line-height:16px;color:#667085;letter-spacing:0.388px;">claim offer</span><span style="left:10.30px;top:593px;font-size:12px;line-height:16px;color:#667085;font-weight:700;letter-spacing:0.176px;">Opportunity Value:</span><span style="left:139.50px;top:593px;font-size:12px;line-height:16px;color:#667085;letter-spacing:0.561px;">$400.00</span><svg class="ai" style="left:9.45px;top:625.15px" width="15.5" height="15.5"><use href="#i-phone"/></svg><svg class="ai" style="left:35.45px;top:625.15px" width="15.5" height="15.5"><use href="#i-chat"/></svg><svg class="ai" style="left:61.45px;top:625.15px" width="15.5" height="15.5"><use href="#i-tag"/></svg><svg class="ai" style="left:87.45px;top:625.15px" width="15.5" height="15.5"><use href="#i-doc"/></svg><svg class="ai" style="left:113.45px;top:625.15px" width="15.5" height="15.5"><use href="#i-check"/></svg><svg class="ai" style="left:139.45px;top:625.15px" width="15.5" height="15.5"><use href="#i-cal"/></svg>
<div class="card" style="left:0.3px;top:658.0px;width:304.500px;height:137.7px"></div><span style="left:9.50px;top:670px;font-size:14px;line-height:18px;color:#101828;letter-spacing:0.185px;-webkit-text-stroke:0.25px #101828;">Rachel Green</span><div style="left:272px;top:667.0px;width:24px;height:24px;border-radius:12px;background:#f2f4f7;border:1px solid #b3bac6;box-sizing:border-box"></div><svg class="ux" style="left:277.80px;top:672.80px" width="12.4" height="12.4"><use href="#i-userx"/></svg><span style="left:10.30px;top:709px;font-size:12px;line-height:16px;color:#667085;font-weight:700;letter-spacing:0.139px;">Opportunity Source:</span><span style="left:139.50px;top:709px;font-size:12px;line-height:16px;color:#667085;letter-spacing:0.350px;"></span><span style="left:10.30px;top:739px;font-size:12px;line-height:16px;color:#667085;font-weight:700;letter-spacing:0.176px;">Opportunity Value:</span><span style="left:139.50px;top:739px;font-size:12px;line-height:16px;color:#667085;letter-spacing:0.561px;">$400.00</span><svg class="ai" style="left:9.45px;top:771.15px" width="15.5" height="15.5"><use href="#i-phone"/></svg><svg class="ai" style="left:35.45px;top:771.15px" width="15.5" height="15.5"><use href="#i-chat"/></svg><svg class="ai" style="left:61.45px;top:771.15px" width="15.5" height="15.5"><use href="#i-tag"/></svg><svg class="ai" style="left:87.45px;top:771.15px" width="15.5" height="15.5"><use href="#i-doc"/></svg><svg class="ai" style="left:113.45px;top:771.15px" width="15.5" height="15.5"><use href="#i-check"/></svg><svg class="ai" style="left:139.45px;top:771.15px" width="15.5" height="15.5"><use href="#i-cal"/></svg>
<div class="colh" style="left:315px;top:0;width:305px;height:58px;border-top:2px solid #fdb92c"></div>
<span style="left:323.60px;top:11px;font-size:14px;line-height:18px;color:#101828;font-weight:700;letter-spacing:-0.036px;">Hot Lead</span>
<span style="left:323.30px;top:34px;font-size:12px;line-height:16px;color:#667085;letter-spacing:0.401px;">4 Opportunities</span>
<span style="left:421.30px;top:34px;font-size:12px;line-height:16px;color:#101828;font-weight:700;letter-spacing:0.420px;">$1,500.00</span>
<div class="card" style="left:315.3px;top:74.0px;width:304.500px;height:137.7px"></div><span style="left:324.50px;top:86px;font-size:14px;line-height:18px;color:#101828;letter-spacing:0.301px;-webkit-text-stroke:0.25px #101828;">Ryan Howell</span><div style="left:587px;top:83.0px;width:24px;height:24px;border-radius:12px;background:#f2f4f7;border:1px solid #b3bac6;box-sizing:border-box"></div><svg class="ux" style="left:592.80px;top:88.80px" width="12.4" height="12.4"><use href="#i-userx"/></svg><span style="left:325.30px;top:125px;font-size:12px;line-height:16px;color:#667085;font-weight:700;letter-spacing:0.139px;">Opportunity Source:</span><span style="left:454.50px;top:125px;font-size:12px;line-height:16px;color:#667085;letter-spacing:-0.407px;">FORM</span><span style="left:325.30px;top:155px;font-size:12px;line-height:16px;color:#667085;font-weight:700;letter-spacing:0.176px;">Opportunity Value:</span><span style="left:454.50px;top:155px;font-size:12px;line-height:16px;color:#667085;letter-spacing:0.354px;">$0.00</span><svg class="ai" style="left:324.45px;top:187.15px" width="15.5" height="15.5"><use href="#i-phone"/></svg><svg class="ai" style="left:350.45px;top:187.15px" width="15.5" height="15.5"><use href="#i-chat"/></svg><svg class="ai" style="left:376.45px;top:187.15px" width="15.5" height="15.5"><use href="#i-tag"/></svg><svg class="ai" style="left:402.45px;top:187.15px" width="15.5" height="15.5"><use href="#i-doc"/></svg><svg class="ai" style="left:428.45px;top:187.15px" width="15.5" height="15.5"><use href="#i-check"/></svg><svg class="ai" style="left:454.45px;top:187.15px" width="15.5" height="15.5"><use href="#i-cal"/></svg>
<div class="card" style="left:315.3px;top:220.0px;width:304.500px;height:107.7px"></div><span style="left:324.50px;top:232px;font-size:14px;line-height:18px;color:#101828;letter-spacing:0.152px;-webkit-text-stroke:0.25px #101828;">Ross Geller</span><div style="left:587px;top:229.0px;width:24px;height:24px;border-radius:12px;background:#d0dffc;border:1px solid #b3b7c2;box-sizing:border-box"></div><span style="left:591.21px;top:234px;font-size:11px;line-height:14px;color:#333f52;letter-spacing:-0.100px;-webkit-text-stroke:0.15px #333f52;">NR</span><span style="left:325.30px;top:271px;font-size:12px;line-height:16px;color:#667085;font-weight:700;letter-spacing:0.176px;">Opportunity Value:</span><span style="left:445.80px;top:271px;font-size:12px;line-height:16px;color:#667085;letter-spacing:0.561px;">$400.00</span><svg class="ai" style="left:324.45px;top:303.45px" width="15.5" height="15.5"><use href="#i-phone"/></svg><svg class="ai" style="left:350.45px;top:303.45px" width="15.5" height="15.5"><use href="#i-chat"/></svg><svg class="ai" style="left:376.45px;top:303.45px" width="15.5" height="15.5"><use href="#i-tag"/></svg><svg class="ai" style="left:402.45px;top:303.45px" width="15.5" height="15.5"><use href="#i-doc"/></svg><svg class="ai" style="left:428.45px;top:303.45px" width="15.5" height="15.5"><use href="#i-check"/></svg><svg class="ai" style="left:454.45px;top:303.45px" width="15.5" height="15.5"><use href="#i-cal"/></svg>
<div class="card" style="left:315.3px;top:336.0px;width:304.500px;height:107.7px"></div><span style="left:324.50px;top:348px;font-size:14px;line-height:18px;color:#101828;letter-spacing:0.238px;-webkit-text-stroke:0.25px #101828;">Ellie Sattler</span><div style="left:587px;top:345.0px;width:24px;height:24px;border-radius:12px;background:#d0dffc;border:1px solid #b3b7c2;box-sizing:border-box"></div><span style="left:591.21px;top:350px;font-size:11px;line-height:14px;color:#333f52;letter-spacing:-0.100px;-webkit-text-stroke:0.15px #333f52;">NR</span><span style="left:325.30px;top:387px;font-size:12px;line-height:16px;color:#667085;font-weight:700;letter-spacing:0.176px;">Opportunity Value:</span><span style="left:445.80px;top:387px;font-size:12px;line-height:16px;color:#667085;letter-spacing:0.389px;">$700.00</span><svg class="ai" style="left:324.45px;top:419.45px" width="15.5" height="15.5"><use href="#i-phone"/></svg><svg class="ai" style="left:350.45px;top:419.45px" width="15.5" height="15.5"><use href="#i-chat"/></svg><svg class="ai" style="left:376.45px;top:419.45px" width="15.5" height="15.5"><use href="#i-tag"/></svg><svg class="ai" style="left:402.45px;top:419.45px" width="15.5" height="15.5"><use href="#i-doc"/></svg><svg class="ai" style="left:428.45px;top:419.45px" width="15.5" height="15.5"><use href="#i-check"/></svg><svg class="ai" style="left:454.45px;top:419.45px" width="15.5" height="15.5"><use href="#i-cal"/></svg>
<div class="card" style="left:315.3px;top:452.0px;width:304.500px;height:107.7px"></div><span style="left:324.50px;top:464px;font-size:14px;line-height:18px;color:#101828;letter-spacing:0.354px;-webkit-text-stroke:0.25px #101828;">Yoda Best</span><div style="left:587px;top:461.0px;width:24px;height:24px;border-radius:12px;background:#d0dffc;border:1px solid #b3b7c2;box-sizing:border-box"></div><span style="left:591.21px;top:466px;font-size:11px;line-height:14px;color:#333f52;letter-spacing:-0.100px;-webkit-text-stroke:0.15px #333f52;">NR</span><span style="left:325.30px;top:503px;font-size:12px;line-height:16px;color:#667085;font-weight:700;letter-spacing:0.176px;">Opportunity Value:</span><span style="left:445.80px;top:503px;font-size:12px;line-height:16px;color:#667085;letter-spacing:0.561px;">$400.00</span><svg class="ai" style="left:324.45px;top:535.45px" width="15.5" height="15.5"><use href="#i-phone"/></svg><svg class="ai" style="left:350.45px;top:535.45px" width="15.5" height="15.5"><use href="#i-chat"/></svg><svg class="ai" style="left:376.45px;top:535.45px" width="15.5" height="15.5"><use href="#i-tag"/></svg><svg class="ai" style="left:402.45px;top:535.45px" width="15.5" height="15.5"><use href="#i-doc"/></svg><svg class="ai" style="left:428.45px;top:535.45px" width="15.5" height="15.5"><use href="#i-check"/></svg><svg class="ai" style="left:454.45px;top:535.45px" width="15.5" height="15.5"><use href="#i-cal"/></svg>
<div class="colh" style="left:630px;top:0;width:305px;height:58px;border-top:2px solid #a9b4dc"></div>
<span style="left:638.60px;top:11px;font-size:14px;line-height:18px;color:#101828;font-weight:700;letter-spacing:0.005px;">Consult Booked</span>
<span style="left:638.30px;top:34px;font-size:12px;line-height:16px;color:#667085;letter-spacing:0.441px;">4 Opportunities</span>
<span style="left:736.90px;top:34px;font-size:12px;line-height:16px;color:#101828;font-weight:700;letter-spacing:0.420px;">$11,200.00</span>
<div class="card" style="left:630.3px;top:74.0px;width:304.500px;height:107.7px"></div><span style="left:639.50px;top:86px;font-size:14px;line-height:18px;color:#101828;letter-spacing:0.398px;-webkit-text-stroke:0.25px #101828;">Saruman The White</span><div style="left:902px;top:83.0px;width:24px;height:24px;border-radius:12px;background:#d0dffc;border:1px solid #b3b7c2;box-sizing:border-box"></div><span style="left:906.21px;top:88px;font-size:11px;line-height:14px;color:#333f52;letter-spacing:-0.100px;-webkit-text-stroke:0.15px #333f52;">NR</span><span style="left:640.30px;top:125px;font-size:12px;line-height:16px;color:#667085;font-weight:700;letter-spacing:0.176px;">Opportunity Value:</span><span style="left:760.80px;top:125px;font-size:12px;line-height:16px;color:#667085;letter-spacing:0.234px;">$10,000.00</span><svg class="ai" style="left:639.45px;top:157.45px" width="15.5" height="15.5"><use href="#i-phone"/></svg><svg class="ai" style="left:665.45px;top:157.45px" width="15.5" height="15.5"><use href="#i-chat"/></svg><svg class="ai" style="left:691.45px;top:157.45px" width="15.5" height="15.5"><use href="#i-tag"/></svg><svg class="ai" style="left:717.45px;top:157.45px" width="15.5" height="15.5"><use href="#i-doc"/></svg><svg class="ai" style="left:743.45px;top:157.45px" width="15.5" height="15.5"><use href="#i-check"/></svg><svg class="ai" style="left:769.45px;top:157.45px" width="15.5" height="15.5"><use href="#i-cal"/></svg>
<div class="card" style="left:630.3px;top:190.0px;width:304.500px;height:107.7px"></div><span style="left:639.50px;top:202px;font-size:14px;line-height:18px;color:#101828;letter-spacing:0.401px;-webkit-text-stroke:0.25px #101828;">Chew Bacca</span><div style="left:902px;top:199.0px;width:24px;height:24px;border-radius:12px;background:#d0dffc;border:1px solid #b3b7c2;box-sizing:border-box"></div><span style="left:906.21px;top:204px;font-size:11px;line-height:14px;color:#333f52;letter-spacing:-0.100px;-webkit-text-stroke:0.15px #333f52;">NR</span><span style="left:640.30px;top:241px;font-size:12px;line-height:16px;color:#667085;font-weight:700;letter-spacing:0.176px;">Opportunity Value:</span><span style="left:760.80px;top:241px;font-size:12px;line-height:16px;color:#667085;letter-spacing:0.561px;">$400.00</span><svg class="ai" style="left:639.45px;top:273.45px" width="15.5" height="15.5"><use href="#i-phone"/></svg><svg class="ai" style="left:665.45px;top:273.45px" width="15.5" height="15.5"><use href="#i-chat"/></svg><svg class="ai" style="left:691.45px;top:273.45px" width="15.5" height="15.5"><use href="#i-tag"/></svg><svg class="ai" style="left:717.45px;top:273.45px" width="15.5" height="15.5"><use href="#i-doc"/></svg><svg class="ai" style="left:743.45px;top:273.45px" width="15.5" height="15.5"><use href="#i-check"/></svg><svg class="ai" style="left:769.45px;top:273.45px" width="15.5" height="15.5"><use href="#i-cal"/></svg>
<div class="card" style="left:630.3px;top:306.0px;width:304.500px;height:107.7px"></div><span style="left:639.50px;top:318px;font-size:14px;line-height:18px;color:#101828;letter-spacing:0.506px;-webkit-text-stroke:0.25px #101828;">John Hammond</span><div style="left:902px;top:315.0px;width:24px;height:24px;border-radius:12px;background:#f2f4f7;border:1px solid #b3bac6;box-sizing:border-box"></div><svg class="ux" style="left:907.80px;top:320.80px" width="12.4" height="12.4"><use href="#i-userx"/></svg><span style="left:640.30px;top:357px;font-size:12px;line-height:16px;color:#667085;font-weight:700;letter-spacing:0.176px;">Opportunity Value:</span><span style="left:760.80px;top:357px;font-size:12px;line-height:16px;color:#667085;letter-spacing:0.561px;">$400.00</span><svg class="ai" style="left:639.45px;top:389.45px" width="15.5" height="15.5"><use href="#i-phone"/></svg><svg class="ai" style="left:665.45px;top:389.45px" width="15.5" height="15.5"><use href="#i-chat"/></svg><svg class="ai" style="left:691.45px;top:389.45px" width="15.5" height="15.5"><use href="#i-tag"/></svg><svg class="ai" style="left:717.45px;top:389.45px" width="15.5" height="15.5"><use href="#i-doc"/></svg><svg class="ai" style="left:743.45px;top:389.45px" width="15.5" height="15.5"><use href="#i-check"/></svg><svg class="ai" style="left:769.45px;top:389.45px" width="15.5" height="15.5"><use href="#i-cal"/></svg>
<div class="card" style="left:630.3px;top:422.0px;width:304.500px;height:107.7px"></div><span style="left:639.50px;top:434px;font-size:14px;line-height:18px;color:#101828;letter-spacing:0.383px;-webkit-text-stroke:0.25px #101828;">Chandler Bing</span><div style="left:902px;top:431.0px;width:24px;height:24px;border-radius:12px;background:#d0dffc;border:1px solid #b3b7c2;box-sizing:border-box"></div><span style="left:906.21px;top:436px;font-size:11px;line-height:14px;color:#333f52;letter-spacing:-0.100px;-webkit-text-stroke:0.15px #333f52;">NR</span><span style="left:640.30px;top:473px;font-size:12px;line-height:16px;color:#667085;font-weight:700;letter-spacing:0.176px;">Opportunity Value:</span><span style="left:760.80px;top:473px;font-size:12px;line-height:16px;color:#667085;letter-spacing:0.561px;">$400.00</span><svg class="ai" style="left:639.45px;top:505.45px" width="15.5" height="15.5"><use href="#i-phone"/></svg><svg class="ai" style="left:665.45px;top:505.45px" width="15.5" height="15.5"><use href="#i-chat"/></svg><svg class="ai" style="left:691.45px;top:505.45px" width="15.5" height="15.5"><use href="#i-tag"/></svg><svg class="ai" style="left:717.45px;top:505.45px" width="15.5" height="15.5"><use href="#i-doc"/></svg><svg class="ai" style="left:743.45px;top:505.45px" width="15.5" height="15.5"><use href="#i-check"/></svg><svg class="ai" style="left:769.45px;top:505.45px" width="15.5" height="15.5"><use href="#i-cal"/></svg>
<div class="colh" style="left:945px;top:0;width:305px;height:58px;border-top:2px solid #8fb2ff"></div>
<span style="left:953.60px;top:11px;font-size:14px;line-height:18px;color:#101828;font-weight:700;letter-spacing:0.240px;">Verbal Yes</span>
<span style="left:953.30px;top:34px;font-size:12px;line-height:16px;color:#667085;letter-spacing:0.415px;">4 Opportunities</span>
<span style="left:1051.50px;top:34px;font-size:12px;line-height:16px;color:#101828;font-weight:700;letter-spacing:0.420px;">$2,500.00</span>
<div class="card" style="left:945.3px;top:74.0px;width:304.500px;height:107.7px"></div><span style="left:954.50px;top:86px;font-size:14px;line-height:18px;color:#101828;letter-spacing:0.394px;-webkit-text-stroke:0.25px #101828;">Ian Malcolm</span><div style="left:1217px;top:83.0px;width:24px;height:24px;border-radius:12px;background:#d0dffc;border:1px solid #b3b7c2;box-sizing:border-box"></div><span style="left:1221.21px;top:88px;font-size:11px;line-height:14px;color:#333f52;letter-spacing:-0.100px;-webkit-text-stroke:0.15px #333f52;">NR</span><span style="left:955.30px;top:125px;font-size:12px;line-height:16px;color:#667085;font-weight:700;letter-spacing:0.176px;">Opportunity Value:</span><span style="left:1075.80px;top:125px;font-size:12px;line-height:16px;color:#667085;letter-spacing:0.389px;">$700.00</span><svg class="ai" style="left:954.45px;top:157.45px" width="15.5" height="15.5"><use href="#i-phone"/></svg><svg class="ai" style="left:980.45px;top:157.45px" width="15.5" height="15.5"><use href="#i-chat"/></svg><svg class="ai" style="left:1006.45px;top:157.45px" width="15.5" height="15.5"><use href="#i-tag"/></svg><svg class="ai" style="left:1032.45px;top:157.45px" width="15.5" height="15.5"><use href="#i-doc"/></svg><svg class="ai" style="left:1058.45px;top:157.45px" width="15.5" height="15.5"><use href="#i-check"/></svg><svg class="ai" style="left:1084.45px;top:157.45px" width="15.5" height="15.5"><use href="#i-cal"/></svg>
<div class="card" style="left:945.3px;top:190.0px;width:304.500px;height:107.7px"></div><span style="left:954.50px;top:202px;font-size:14px;line-height:18px;color:#101828;letter-spacing:0.508px;-webkit-text-stroke:0.25px #101828;">Gandalf Mithrandir</span><div style="left:1217px;top:199.0px;width:24px;height:24px;border-radius:12px;background:#f2f4f7;border:1px solid #b3bac6;box-sizing:border-box"></div><svg class="ux" style="left:1222.80px;top:204.80px" width="12.4" height="12.4"><use href="#i-userx"/></svg><span style="left:955.30px;top:241px;font-size:12px;line-height:16px;color:#667085;font-weight:700;letter-spacing:0.176px;">Opportunity Value:</span><span style="left:1075.80px;top:241px;font-size:12px;line-height:16px;color:#667085;letter-spacing:0.389px;">$700.00</span><svg class="ai" style="left:954.45px;top:273.45px" width="15.5" height="15.5"><use href="#i-phone"/></svg><svg class="ai" style="left:980.45px;top:273.45px" width="15.5" height="15.5"><use href="#i-chat"/></svg><svg class="ai" style="left:1006.45px;top:273.45px" width="15.5" height="15.5"><use href="#i-tag"/></svg><svg class="ai" style="left:1032.45px;top:273.45px" width="15.5" height="15.5"><use href="#i-doc"/></svg><svg class="ai" style="left:1058.45px;top:273.45px" width="15.5" height="15.5"><use href="#i-check"/></svg><svg class="ai" style="left:1084.45px;top:273.45px" width="15.5" height="15.5"><use href="#i-cal"/></svg>
<div class="card" style="left:945.3px;top:306.0px;width:304.500px;height:107.7px"></div><span style="left:954.50px;top:318px;font-size:14px;line-height:18px;color:#101828;letter-spacing:0.568px;-webkit-text-stroke:0.25px #101828;">Anakin &quot;Darth Vader&quot; Skywalker</span><div style="left:1217px;top:315.0px;width:24px;height:24px;border-radius:12px;background:#d0dffc;border:1px solid #b3b7c2;box-sizing:border-box"></div><span style="left:1221.21px;top:320px;font-size:11px;line-height:14px;color:#333f52;letter-spacing:-0.100px;-webkit-text-stroke:0.15px #333f52;">NR</span><span style="left:955.30px;top:357px;font-size:12px;line-height:16px;color:#667085;font-weight:700;letter-spacing:0.176px;">Opportunity Value:</span><span style="left:1075.80px;top:357px;font-size:12px;line-height:16px;color:#667085;letter-spacing:0.561px;">$400.00</span><svg class="ai" style="left:954.45px;top:389.45px" width="15.5" height="15.5"><use href="#i-phone"/></svg><svg class="ai" style="left:980.45px;top:389.45px" width="15.5" height="15.5"><use href="#i-chat"/></svg><svg class="ai" style="left:1006.45px;top:389.45px" width="15.5" height="15.5"><use href="#i-tag"/></svg><svg class="ai" style="left:1032.45px;top:389.45px" width="15.5" height="15.5"><use href="#i-doc"/></svg><svg class="ai" style="left:1058.45px;top:389.45px" width="15.5" height="15.5"><use href="#i-check"/></svg><svg class="ai" style="left:1084.45px;top:389.45px" width="15.5" height="15.5"><use href="#i-cal"/></svg>
<div class="card" style="left:945.3px;top:422.0px;width:304.500px;height:107.7px"></div><span style="left:954.50px;top:434px;font-size:14px;line-height:18px;color:#101828;letter-spacing:0.461px;-webkit-text-stroke:0.25px #101828;">Luke Skywalker</span><div style="left:1217px;top:431.0px;width:24px;height:24px;border-radius:12px;background:#d0dffc;border:1px solid #b3b7c2;box-sizing:border-box"></div><span style="left:1221.21px;top:436px;font-size:11px;line-height:14px;color:#333f52;letter-spacing:-0.100px;-webkit-text-stroke:0.15px #333f52;">NR</span><span style="left:955.30px;top:473px;font-size:12px;line-height:16px;color:#667085;font-weight:700;letter-spacing:0.176px;">Opportunity Value:</span><span style="left:1075.80px;top:473px;font-size:12px;line-height:16px;color:#667085;letter-spacing:0.389px;">$700.00</span><svg class="ai" style="left:954.45px;top:505.45px" width="15.5" height="15.5"><use href="#i-phone"/></svg><svg class="ai" style="left:980.45px;top:505.45px" width="15.5" height="15.5"><use href="#i-chat"/></svg><svg class="ai" style="left:1006.45px;top:505.45px" width="15.5" height="15.5"><use href="#i-tag"/></svg><svg class="ai" style="left:1032.45px;top:505.45px" width="15.5" height="15.5"><use href="#i-doc"/></svg><svg class="ai" style="left:1058.45px;top:505.45px" width="15.5" height="15.5"><use href="#i-check"/></svg><svg class="ai" style="left:1084.45px;top:505.45px" width="15.5" height="15.5"><use href="#i-cal"/></svg>
<div class="colh" style="left:1260px;top:0;width:305px;height:58px;border-top:2px solid #6e9df9"></div>
<span style="left:1268.60px;top:11px;font-size:14px;line-height:18px;color:#101828;font-weight:700;letter-spacing:-0.024px;">Proposal Signed</span>
<span style="left:1268.30px;top:34px;font-size:12px;line-height:16px;color:#667085;letter-spacing:0.415px;">4 Opportunities</span>
<span style="left:1366.50px;top:34px;font-size:12px;line-height:16px;color:#101828;font-weight:700;letter-spacing:0.420px;">$1,500.00</span>
<div class="card" style="left:1260.3px;top:74.0px;width:304.500px;height:107.7px"></div><span style="left:1269.50px;top:86px;font-size:14px;line-height:18px;color:#101828;letter-spacing:0.301px;-webkit-text-stroke:0.25px #101828;">Ryan Howell</span><div style="left:1532px;top:83.0px;width:24px;height:24px;border-radius:12px;background:#d0dffc;border:1px solid #b3b7c2;box-sizing:border-box"></div><span style="left:1536.21px;top:88px;font-size:11px;line-height:14px;color:#333f52;letter-spacing:-0.100px;-webkit-text-stroke:0.15px #333f52;">NR</span><span style="left:1270.30px;top:125px;font-size:12px;line-height:16px;color:#667085;font-weight:700;letter-spacing:0.176px;">Opportunity Value:</span><span style="left:1390.80px;top:125px;font-size:12px;line-height:16px;color:#667085;letter-spacing:0.354px;">$0.00</span><svg class="ai" style="left:1269.45px;top:157.45px" width="15.5" height="15.5"><use href="#i-chat"/></svg><svg class="ai" style="left:1295.45px;top:157.45px" width="15.5" height="15.5"><use href="#i-tag"/></svg><svg class="ai" style="left:1321.45px;top:157.45px" width="15.5" height="15.5"><use href="#i-doc"/></svg><svg class="ai" style="left:1347.45px;top:157.45px" width="15.5" height="15.5"><use href="#i-check"/></svg><svg class="ai" style="left:1373.45px;top:157.45px" width="15.5" height="15.5"><use href="#i-cal"/></svg>
<div class="card" style="left:1260.3px;top:190.0px;width:304.500px;height:107.7px"></div><span style="left:1269.50px;top:202px;font-size:14px;line-height:18px;color:#101828;letter-spacing:0.305px;-webkit-text-stroke:0.25px #101828;">Obi Wan Kenobi</span><div style="left:1532px;top:199.0px;width:24px;height:24px;border-radius:12px;background:#d0dffc;border:1px solid #b3b7c2;box-sizing:border-box"></div><span style="left:1536.21px;top:204px;font-size:11px;line-height:14px;color:#333f52;letter-spacing:-0.100px;-webkit-text-stroke:0.15px #333f52;">NR</span><span style="left:1270.30px;top:241px;font-size:12px;line-height:16px;color:#667085;font-weight:700;letter-spacing:0.176px;">Opportunity Value:</span><span style="left:1390.80px;top:241px;font-size:12px;line-height:16px;color:#667085;letter-spacing:0.389px;">$700.00</span><svg class="ai" style="left:1269.45px;top:273.45px" width="15.5" height="15.5"><use href="#i-phone"/></svg><svg class="ai" style="left:1295.45px;top:273.45px" width="15.5" height="15.5"><use href="#i-chat"/></svg><svg class="ai" style="left:1321.45px;top:273.45px" width="15.5" height="15.5"><use href="#i-tag"/></svg><svg class="ai" style="left:1347.45px;top:273.45px" width="15.5" height="15.5"><use href="#i-doc"/></svg><svg class="ai" style="left:1373.45px;top:273.45px" width="15.5" height="15.5"><use href="#i-check"/></svg><svg class="ai" style="left:1399.45px;top:273.45px" width="15.5" height="15.5"><use href="#i-cal"/></svg>
<div class="card" style="left:1260.3px;top:306.0px;width:304.500px;height:107.7px"></div><span style="left:1269.50px;top:318px;font-size:14px;line-height:18px;color:#101828;letter-spacing:0.490px;-webkit-text-stroke:0.25px #101828;">Henry Wu</span><div style="left:1532px;top:315.0px;width:24px;height:24px;border-radius:12px;background:#d0dffc;border:1px solid #b3b7c2;box-sizing:border-box"></div><span style="left:1536.21px;top:320px;font-size:11px;line-height:14px;color:#333f52;letter-spacing:-0.100px;-webkit-text-stroke:0.15px #333f52;">NR</span><span style="left:1270.30px;top:357px;font-size:12px;line-height:16px;color:#667085;font-weight:700;letter-spacing:0.176px;">Opportunity Value:</span><span style="left:1390.80px;top:357px;font-size:12px;line-height:16px;color:#667085;letter-spacing:0.561px;">$400.00</span><svg class="ai" style="left:1269.45px;top:389.45px" width="15.5" height="15.5"><use href="#i-phone"/></svg><svg class="ai" style="left:1295.45px;top:389.45px" width="15.5" height="15.5"><use href="#i-chat"/></svg><svg class="ai" style="left:1321.45px;top:389.45px" width="15.5" height="15.5"><use href="#i-tag"/></svg><svg class="ai" style="left:1347.45px;top:389.45px" width="15.5" height="15.5"><use href="#i-doc"/></svg><svg class="ai" style="left:1373.45px;top:389.45px" width="15.5" height="15.5"><use href="#i-check"/></svg><svg class="ai" style="left:1399.45px;top:389.45px" width="15.5" height="15.5"><use href="#i-cal"/></svg>
<div class="card" style="left:1260.3px;top:422.0px;width:304.500px;height:107.7px"></div><span style="left:1269.50px;top:434px;font-size:14px;line-height:18px;color:#101828;letter-spacing:0.278px;-webkit-text-stroke:0.25px #101828;">Alan Grant</span><div style="left:1532px;top:431.0px;width:24px;height:24px;border-radius:12px;background:#d0dffc;border:1px solid #b3b7c2;box-sizing:border-box"></div><span style="left:1536.21px;top:436px;font-size:11px;line-height:14px;color:#333f52;letter-spacing:-0.100px;-webkit-text-stroke:0.15px #333f52;">NR</span><span style="left:1270.30px;top:473px;font-size:12px;line-height:16px;color:#667085;font-weight:700;letter-spacing:0.176px;">Opportunity Value:</span><span style="left:1390.80px;top:473px;font-size:12px;line-height:16px;color:#667085;letter-spacing:0.561px;">$400.00</span><svg class="ai" style="left:1269.45px;top:505.45px" width="15.5" height="15.5"><use href="#i-phone"/></svg><svg class="ai" style="left:1295.45px;top:505.45px" width="15.5" height="15.5"><use href="#i-chat"/></svg><svg class="ai" style="left:1321.45px;top:505.45px" width="15.5" height="15.5"><use href="#i-tag"/></svg><svg class="ai" style="left:1347.45px;top:505.45px" width="15.5" height="15.5"><use href="#i-doc"/></svg><svg class="ai" style="left:1373.45px;top:505.45px" width="15.5" height="15.5"><use href="#i-check"/></svg><svg class="ai" style="left:1399.45px;top:505.45px" width="15.5" height="15.5"><use href="#i-cal"/></svg>
</div>
<div style="left:1705.700px;top:88px;width:3px;height:900px;background:#fff"></div>
<div style="left:224px;top:976.500px;width:1490px;height:3px;background:#fff"></div>
<div style="left:246px;top:965px;width:1104px;height:24px;border-radius:8px;background:#7d7d7d;border:2px solid #fff;box-sizing:border-box"></div>
<svg style="left:260px;top:329px" width="14" height="20" viewBox="260 329 14 20" fill="#000" stroke="#fff" stroke-width="1" stroke-linejoin="round"><path d="M262.900 331.700V342.500L265.300 340.300L267.400 345.800L269.500 344.900L267.300 339.700H270.900Z"/></svg>
</div>
</body></html>
